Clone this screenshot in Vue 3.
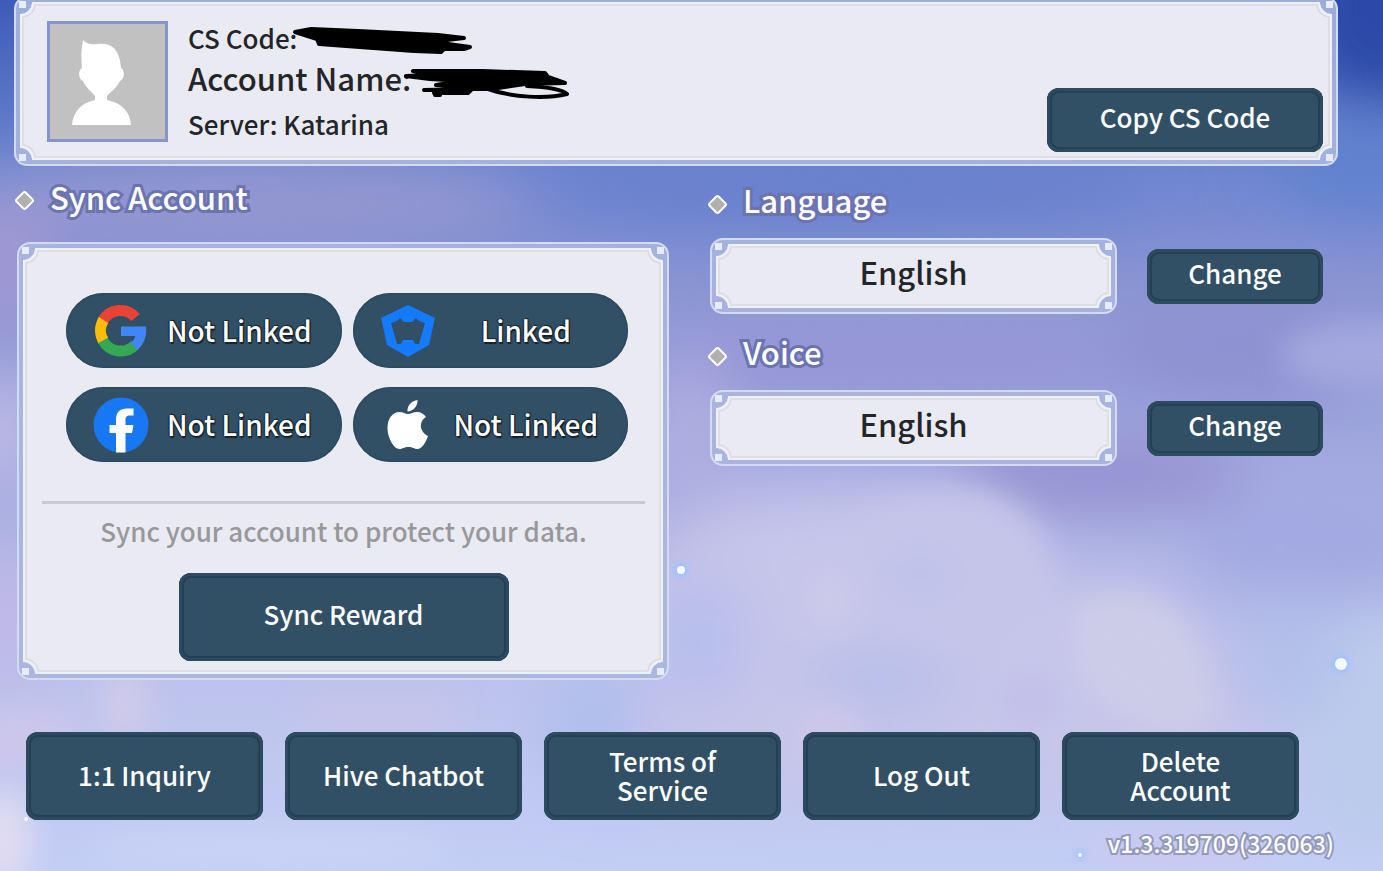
<script setup>
import { ref } from "vue";

const server = ref("Katarina");
const version = ref("v1.3.319709(326063)");

const accounts = ref([
  { id: "google", label: "Google", linked: false },
  { id: "hive", label: "Hive", linked: true },
  { id: "facebook", label: "Facebook", linked: false },
  { id: "apple", label: "Apple", linked: false },
]);

const settings = ref([
  { title: "Language", value: "English" },
  { title: "Voice", value: "English" },
]);

const actions = [
  "1:1 Inquiry",
  "Hive Chatbot",
  "Terms of Service",
  "Log Out",
  "Delete Account",
];

const status = (account) => (account.linked ? "Linked" : "Not Linked");
</script>

<template>
  <div class="page">
    <!-- sky -->
    <svg
      class="sky"
      viewBox="0 0 1383 871"
      preserveAspectRatio="none"
      aria-hidden="true"
    >
      <defs>
        <linearGradient id="skyBase" x1="0" y1="0" x2="0" y2="1">
          <stop offset="0" stop-color="#3c5cb8" />
          <stop offset="0.2" stop-color="#6f86d0" />
          <stop offset="0.34" stop-color="#8b95d3" />
          <stop offset="0.55" stop-color="#a4abe0" />
          <stop offset="0.75" stop-color="#bcc1ea" />
          <stop offset="1" stop-color="#c3cef5" />
        </linearGradient>
        <filter id="soft" x="-50%" y="-50%" width="200%" height="200%">
          <feGaussianBlur stdDeviation="28" />
        </filter>
        <filter id="puff" x="-50%" y="-50%" width="200%" height="200%">
          <feGaussianBlur stdDeviation="14" />
        </filter>
        <filter id="glow" x="-100%" y="-100%" width="300%" height="300%">
          <feGaussianBlur stdDeviation="3" />
        </filter>
      </defs>
      <rect width="1383" height="871" fill="url(#skyBase)" />
      <g filter="url(#soft)">
        <ellipse cx="1390" cy="10" rx="90" ry="90" fill="#2c48a8" />
        <ellipse cx="1370" cy="165" rx="90" ry="45" fill="#5f82cf" />
        <ellipse cx="240" cy="205" rx="290" ry="46" fill="#9497d0" />
        <ellipse cx="850" cy="190" rx="300" ry="30" fill="#687fcd" />
        <ellipse cx="0" cy="270" rx="60" ry="60" fill="#9f98d4" />
        <ellipse cx="900" cy="355" rx="260" ry="45" fill="#9697d6" />
        <ellipse cx="1240" cy="345" rx="130" ry="60" fill="#8f92d2" />
        <ellipse cx="1100" cy="475" rx="150" ry="34" fill="#9490d0" />
        <ellipse cx="1310" cy="540" rx="120" ry="60" fill="#a3a9e2" />
        <ellipse cx="690" cy="480" rx="50" ry="120" fill="#aeaee0" />
        <ellipse cx="1370" cy="730" rx="70" ry="120" fill="#bccbec" />
        <ellipse cx="620" cy="730" rx="80" ry="70" fill="#b0bdec" />
        <ellipse cx="5" cy="430" rx="30" ry="60" fill="#c3bde7" />
        <ellipse cx="5" cy="620" rx="40" ry="70" fill="#c0b8e6" />
        <path
          d="M640 560C740 470 850 480 930 500C1000 495 1040 530 1060 590C1120 570 1180 590 1205 660L1290 790L640 800Z"
          fill="#c6c5ea"
        />
        <ellipse cx="1290" cy="650" rx="50" ry="60" fill="#b2bfe9" />
        <ellipse cx="880" cy="680" rx="80" ry="34" fill="#b8c0ea" />
        <ellipse cx="700" cy="640" rx="40" ry="60" fill="#b4bdec" />
      </g>
      <g filter="url(#puff)">
        <ellipse cx="1370" cy="355" rx="90" ry="34" fill="#a3a8de" />
        <path
          d="M850 530C880 485 960 480 1000 500C1040 520 1050 560 1052 600L1000 660L880 620Z"
          fill="#c5c5ea"
        />
        <path
          d="M1070 612C1110 580 1180 590 1200 655C1215 705 1225 735 1180 735C1130 730 1085 700 1075 660Z"
          fill="#cdcce8"
        />
        <ellipse cx="920" cy="575" rx="34" ry="24" fill="#bfc2ea" />
        <ellipse cx="1030" cy="700" rx="30" ry="24" fill="#c2bfe9" />
        <ellipse cx="825" cy="735" rx="34" ry="30" fill="#cdc8ea" />
        <ellipse cx="830" cy="600" rx="24" ry="34" fill="#cccaea" />
        <ellipse cx="125" cy="705" rx="24" ry="34" fill="#d0caea" />
        <ellipse cx="20" cy="740" rx="60" ry="30" fill="#cdc6ec" />
        <ellipse cx="380" cy="715" rx="80" ry="14" fill="#c9c4ea" />
        <ellipse cx="5" cy="840" rx="26" ry="50" fill="#e0dbf2" />
        <ellipse cx="270" cy="850" rx="180" ry="20" fill="#c9d3f6" />
        <ellipse cx="1180" cy="850" rx="100" ry="14" fill="#ccc8ee" />
      </g>
      <g fill="#9fc0ff" filter="url(#glow)">
        <circle cx="681" cy="570" r="7" />
        <circle cx="1341" cy="664" r="9" />
        <circle cx="1080" cy="855" r="5" />
      </g>
      <g fill="#f4faff">
        <circle cx="681" cy="570" r="4" />
        <circle cx="1341" cy="664" r="6" />
        <circle cx="1080" cy="855" r="2" />
        <circle cx="26" cy="819" r="2" />
      </g>
    </svg>

    <header class="panel profile">
      <svg class="avatar" viewBox="0 0 115 115" role="img" aria-label="Avatar">
        <rect width="115" height="115" fill="#c1c1c1" />
        <path
          d="M33 16C37 20 41 21 47 20C60 18 70 24 71 44C75 46 75 55 70 57C67 64 60 68 57 72V76C72 79 80 88 81 101H22C23 88 31 79 45 76V72C42 68 36 64 33 57C28 55 28 46 32 44C31 34 31 25 33 16Z"
          fill="#fff"
        />
      </svg>
      <div class="info">
        <p class="code">
          CS Code:
          <svg class="scribble" viewBox="0 0 184 32" aria-hidden="true">
            <path
              d="M4 6L20 3L67 5L147 9L173 12L156 14L157 18L179 21L173 23L153 23L150 26L123 25L28 18L26 13Z"
              fill="#000"
            />
          </svg>
        </p>
        <p class="name">
          Account Name:
          <svg class="scribble" viewBox="0 0 184 32" aria-hidden="true">
            <path
              d="M11 4L80 4L143 6L146 10L163 16L123 17L90 22L70 22L34 18L60 14L28 12L4 9L30 8Z"
              fill="#000"
            />
            <path
              d="M83 21C110 31 145 32 165 27C160 22 145 20 125 19M22 23L70 22L66 26L32 26M33 28H38"
            />
          </svg>
        </p>
        <p class="server">Server: {{ server }}</p>
      </div>
      <button type="button" class="btn copy">Copy CS Code</button>
    </header>

    <main class="content">
      <section>
        <h2 class="title">
          <i class="diamond"></i>
          <span>Sync Account</span>
        </h2>
        <div class="panel sync">
          <div class="accounts">
            <button
              v-for="account in accounts"
              :key="account.id"
              type="button"
              class="pill"
              :aria-label="`${account.label}: ${status(account)}`"
            >
              <svg v-if="account.id === 'google'" viewBox="0 0 56 56">
                <g fill="none" stroke-width="11">
                  <path d="M10 17.500A20 20 0 0 1 42.500 14.500" stroke="#ea4335" />
                  <path d="M10.500 38A20 20 0 0 1 10.500 17" stroke="#fbbc05" />
                  <path d="M42 42A20 20 0 0 1 10 37.500" stroke="#34a853" />
                </g>
                <path
                  d="M28 23.500H53C54 33 51 41 45 46.500L37 40C40 38 41.500 36 42.500 33H28Z"
                  fill="#4285f4"
                />
              </svg>
              <svg v-else-if="account.id === 'hive'" viewBox="0 0 56 56">
                <path
                  d="M28 2L55 15L49 42L28 54L7 42L1 15ZM11 20L17 41L21 41L23 37H33L35 41L39 41L45 20L39 18L36 15L32 19H24L20 15L17 18Z"
                  fill="#147aff"
                  fill-rule="evenodd"
                />
              </svg>
              <svg v-else-if="account.id === 'facebook'" viewBox="0 0 56 56">
                <circle cx="28" cy="28" r="27.500" fill="#1877f2" />
                <path
                  d="M23 55.500V36H16.500V28H23V23C23 15 27 11.500 34 11.500H40.500V18.500H37C33.500 18.500 32.500 20 32.500 23V28H40.500L39 36H32.500V55.500Z"
                  fill="#fff"
                />
              </svg>
              <svg v-else viewBox="0 0 56 56">
                <path
                  d="M37.500 3C38 9 33 14.500 27.500 14.500C27 8.500 32 3.500 37.500 3ZM28 17C31 17 33 15 37 15C41 15 44 17 46 20C38 25 40 35 48 39C46 45 42 52 37.500 52C34 52 33 50 28.500 50C24 50 22.500 52 19.500 52C14 52 7.500 41 7.500 31C7.500 21 13 15 19.500 15C23 15 25.500 17 28 17Z"
                  fill="#fff"
                />
              </svg>
              <span>{{ status(account) }}</span>
            </button>
          </div>
          <hr />
          <p class="hint">Sync your account to protect your data.</p>
          <button type="button" class="btn reward">Sync Reward</button>
        </div>
      </section>

      <div class="settings">
        <section v-for="item in settings" :key="item.title">
          <h2 class="title">
            <i class="diamond"></i>
            <span>{{ item.title }}</span>
          </h2>
          <div class="setting">
            <div class="panel value">{{ item.value }}</div>
            <button type="button" class="btn change">Change</button>
          </div>
        </section>
      </div>
    </main>

    <nav class="actions">
      <button v-for="action in actions" :key="action" type="button" class="btn">
        {{ action }}
      </button>
    </nav>
    <p class="version">{{ version }}</p>
  </div>
</template>

<style>
body {
  margin: 0;
}
</style>

<style scoped>
.page {
  position: relative;
  min-height: 100vh;
  overflow: hidden;
  box-sizing: border-box;
  font-family: "Noto Sans CJK KR", "Noto Sans", sans-serif;
  font-weight: 500;
  color: #242528;
}

.page * {
  box-sizing: border-box;
}

.sky {
  position: absolute;
  inset: 0;
  width: 100%;
  height: 100%;
  z-index: 0;
}

.profile,
.content,
.actions,
.version {
  position: relative;
  z-index: 1;
}

p,
h2 {
  margin: 0;
}

/* framed panel with notched corners */
.panel {
  border: 1px solid transparent;
  border-image-source: url("data:image/svg+xml,%3Csvg xmlns='http://www.w3.org/2000/svg' width='72' height='72'%3E%3Crect x='1' y='1' width='70' height='70' rx='12' fill='%23aab6df' fill-opacity='.9' stroke='%23d3dbf3' stroke-width='2'/%3E%3Cpath d='M19 7H53A13 13 0 0 0 65 19V53A13 13 0 0 0 53 65H19A13 13 0 0 0 7 53V19A13 13 0 0 0 19 7Z' fill='%23eaebf2' stroke='%23eef1fb' stroke-width='2'/%3E%3Cpath d='M21 9H51A13 13 0 0 0 63 21V51A13 13 0 0 0 51 63H21A13 13 0 0 0 9 51V21A13 13 0 0 0 21 9Z' fill='none' stroke='%23d9dbe1' stroke-width='1.500'/%3E%3Cpath d='M5 5H12V12H5ZM60 5H67V12H60ZM5 60H12V67H5ZM60 60H67V67H60Z' fill='%23e6ecfb'/%3E%3C/svg%3E");
  border-image-slice: 24 fill;
  border-image-width: 24px;
}

.btn {
  border: 0;
  padding: 0 12px 8px;
  border-radius: 12px;
  background: #325065;
  box-shadow: inset 0 0 0 3px #2d4b60, inset 0 0 0 5px #253f54;
  color: #fff;
  font: inherit;
  font-size: 26px;
  line-height: 29px;
  cursor: pointer;
}

.profile {
  display: flex;
  align-items: flex-start;
  margin: -4px 45px 0 14px;
  padding: 24px 14px 13px 32px;
}

.avatar {
  width: 121px;
  height: 121px;
  border: 3px solid #8794cc;
}

.info {
  flex: 1;
  margin: -3px 0 0 20px;
  padding-bottom: 2px;
  white-space: nowrap;
}

.code,
.server {
  font-size: 26px;
  line-height: 40px;
}

.server {
  line-height: 52px;
}

.name {
  font-size: 31px;
  line-height: 40px;
}

.scribble {
  width: 184px;
  height: 32px;
  margin: -10px 0 -10px -16px;
  vertical-align: middle;
  fill: none;
  stroke: #000;
  stroke-width: 4;
  stroke-linecap: round;
  stroke-linejoin: round;
}

.code .scribble {
  margin-left: -12px;
}

.copy {
  align-self: flex-end;
  width: 276px;
  height: 64px;
}

.content {
  display: grid;
  grid-template-columns: 652fr 613fr;
  gap: 41px;
  padding: 0 60px 0 17px;
}

.title {
  display: flex;
  align-items: center;
  gap: 18px;
  height: 68px;
  margin: 0 0 8px;
  font-size: 31px;
  font-weight: 500;
  line-height: 60px;
  color: #fff;
}

.title span {
  padding-bottom: 6px;
  -webkit-text-stroke: 6px #6b73b0;
  paint-order: stroke fill;
}

.diamond {
  width: 15px;
  height: 15px;
  border: 2px solid #fff;
  border-radius: 3px;
  background: #b1b1b1;
  transform: rotate(45deg);
}

.sync {
  padding: 50px 23px 18px 24px;
  text-align: center;
}

.accounts {
  display: grid;
  grid-template-columns: 1fr 1fr;
  gap: 19px 11px;
  padding: 0 17px 0 24px;
}

.pill {
  display: flex;
  align-items: center;
  height: 75px;
  padding: 0 12px 0 27px;
  border: 0;
  border-radius: 38px;
  background: #325065;
  box-shadow: inset 0 0 2px 1px #2a465c;
  color: #fff;
  font: inherit;
  font-size: 28px;
  cursor: pointer;
}

.pill svg {
  width: 56px;
  height: 56px;
}

.pill span {
  flex: 1;
  padding-bottom: 2px;
  white-space: nowrap;
  text-shadow: 1px 2px 1px #14202b, -1px 0 1px #14202b, 1px -1px 1px #14202b;
}

hr {
  height: 3px;
  margin: 39px 0 0;
  border: 0;
  background: #c9cad0;
}

.hint {
  padding-bottom: 4px;
  font-size: 26px;
  line-height: 54px;
  color: #98989b;
}

.reward {
  width: 330px;
  height: 88px;
  margin-top: 11px;
}

.settings {
  display: flex;
  flex-direction: column;
  gap: 6px;
  padding-top: 2px;
}

.settings .title {
  padding-top: 4px;
  margin-bottom: 2px;
}

.settings .title span {
  padding-bottom: 8px;
}

.setting {
  display: flex;
  align-items: center;
  gap: 30px;
}

.value {
  flex: 1;
  height: 76px;
  text-align: center;
  font-size: 31px;
  line-height: 66px;
}

.change {
  width: 176px;
  height: 55px;
}

.actions {
  display: grid;
  grid-template-columns: repeat(5, 1fr);
  gap: 22px;
  margin-top: 52px;
  padding: 0 84px 0 26px;
}

.actions .btn {
  height: 88px;
  padding: 0 34px 3px;
}

.version {
  padding-right: 49px;
  text-align: right;
  font-size: 23px;
  line-height: 46px;
  color: #fff;
  -webkit-text-stroke: 4px #9498bb;
  paint-order: stroke fill;
}
</style>
